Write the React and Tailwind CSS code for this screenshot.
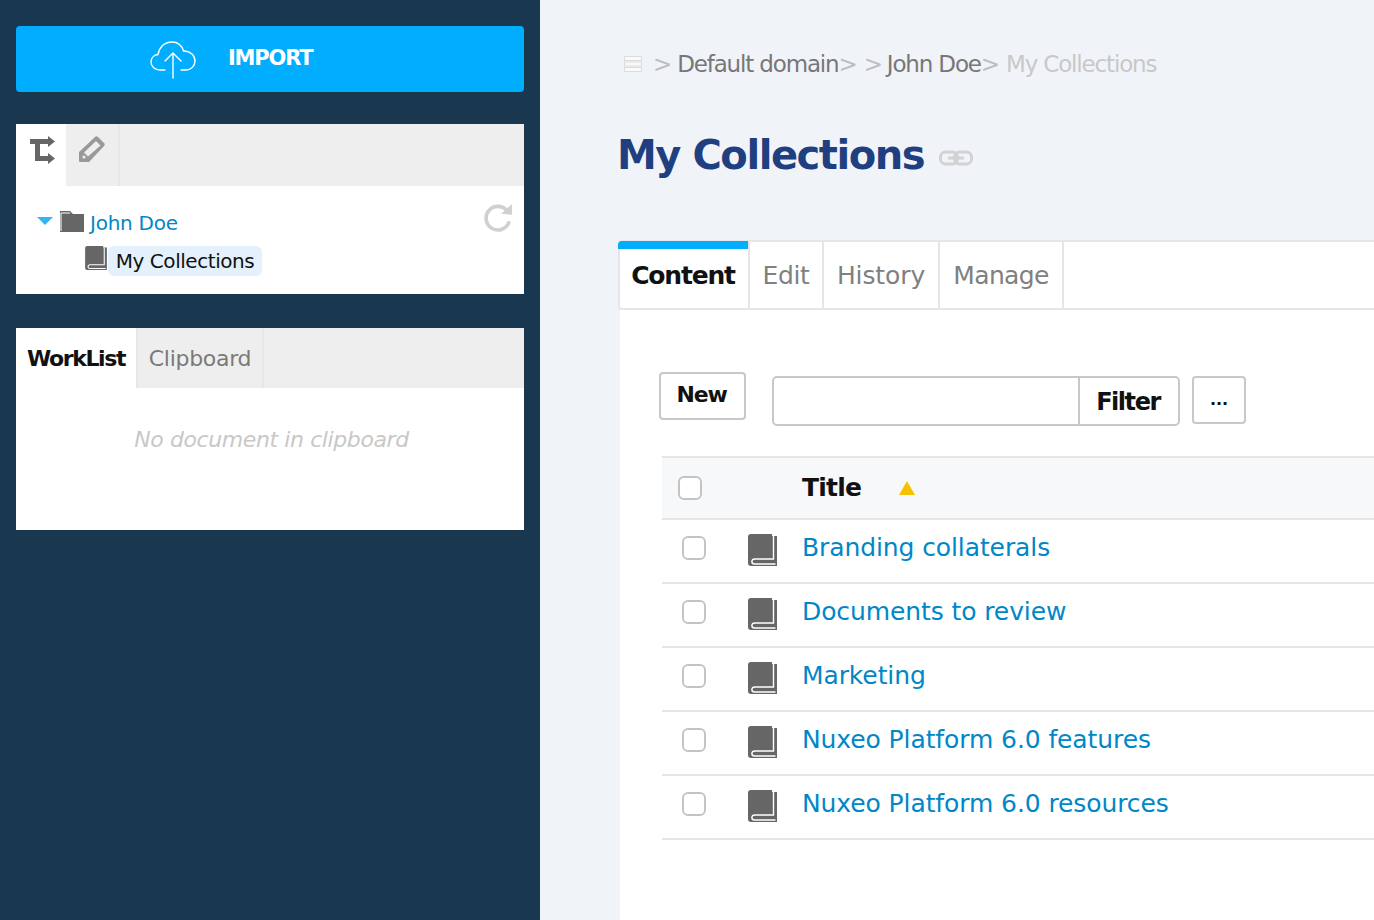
const font = { fontFamily: '"DejaVu Sans", sans-serif' };

function Book({ className = "" }) {
  return (
    <svg viewBox="0 0 29 32" className={className}>
      <path d="M3 0H24V2H29V32H3C1 32 0 31 0 29V3C0 1 1 0 3 0Z" fill="#666" />
      <path d="M25.5 2V25H6.5C3 25 3 30 6.5 30H27.5" fill="none" stroke="#fff" strokeWidth="1.4" />
      <path d="M6 27.5H25" stroke="#666" strokeWidth="1.6" />
    </svg>
  );
}

function Check() {
  return <span className="block w-6 h-6 rounded-[6px] border-2 border-[#c4c4c4] bg-white" />;
}

function Gt({ c = "" }) {
  return <span className={"text-[#bdbdbd] " + c}>&gt;</span>;
}

const rows = [
  "Branding collaterals",
  "Documents to review",
  "Marketing",
  "Nuxeo Platform 6.0 features",
  "Nuxeo Platform 6.0 resources",
];

export default function App() {
  return (
    <div className="flex w-[1374px] h-[920px] overflow-hidden bg-[#f0f4f9]" style={font}>
      <aside className="w-[540px] shrink-0 bg-[#1a3750] px-4 pt-[26px]">
        <button className="flex items-center w-full h-[66px] rounded-[4px] bg-[#00adff] text-white font-bold text-[21px] tracking-[-1.2px]">
          <svg viewBox="0 0 46 40" className="w-[46px] h-[40px] ml-[134px] mt-[1px]" fill="none" stroke="#fff" strokeWidth="1.4" strokeLinecap="round" strokeLinejoin="round">
            <path d="M15 30H10C5 30 1 26.5 1 22C1 18 4 15 8 14.5C9 8 14 2 22 2C28 2 32 6 33.5 11C40 10.5 45 15.5 45 21C45 26 41 30 36 30H31" />
            <path d="M23 38V14M15 21L23 13L31 21" />
          </svg>
          <span className="ml-[32px]">IMPORT</span>
        </button>

        <section className="mt-8 h-[170px] bg-white">
          <div className="flex h-[62px] bg-[#eeeeee]">
            <div className="flex justify-center pt-[12px] pl-[2px] w-[50px] bg-white">
              <svg viewBox="0 0 25 28" className="w-[25px] h-[28px]" fill="#666">
                <path d="M0 3H18V0L25 5.5L18 11V8H10V20H18V17L25 22.5L18 28V25H5V8H0Z" />
              </svg>
            </div>
            <div className="flex justify-center pt-[11px] w-[54px] border-r-2 border-[#e6e6e6]">
              <svg viewBox="0 0 28 28" className="w-[28px] h-[28px]">
                <path d="M2 27C1 27 1 26 1 25V17L17 2C18 1 19 1 20 2L26 8C27 9 27 10 26 11L11 27Z" fill="#999" />
                <path d="M18 6L22.5 10.5L10 21.5L6 17.5Z" fill="#eee" />
                <circle cx="6" cy="22" r="1.6" fill="#eee" />
              </svg>
            </div>
          </div>
          <div className="relative pl-[21px] pt-[18px] text-[20px] tracking-[-0.25px]">
            <svg viewBox="0 0 28 28" className="absolute right-[11px] top-[17px] w-[30px] h-[30px]" fill="none">
              <path d="M23 8A11 11 0 1 0 24.5 17" stroke="#d0d0d0" strokeWidth="3.4" />
              <path d="M17 10L27 11V1Z" fill="#d0d0d0" />
            </svg>
            <div className="flex items-center h-[38px]">
              <span className="w-0 h-0 border-x-[8px] border-x-transparent border-t-[8px] border-t-[#35b4f4] -mt-[4px]" />
              <svg viewBox="0 0 24 22" className="w-[24px] h-[22px] ml-[7px] -mt-[5px]">
                <path d="M0 22V1H10L13 4H24V22Z" fill="#666" />
                <path d="M1 21V3H10" fill="none" stroke="#fff" strokeWidth="1" />
              </svg>
              <span className="ml-[6px] text-[#0087c7]">John Doe</span>
            </div>
            <div className="flex items-center h-[30px] ml-[48px] mt-[4px] tracking-[-0.45px]">
              <Book className="w-[22px] h-[24px] -mt-[6px]" />
              <span className="ml-[1px] w-[154px] justify-center h-[30px] flex items-center rounded-[6px] bg-[#e4f0fb] text-[#111] whitespace-nowrap">My Collections</span>
            </div>
          </div>
        </section>

        <section className="mt-[34px] h-[202px] bg-white">
          <div className="flex h-[60px] bg-[#eeeeee] text-[22px] tracking-[-0.3px]">
            <div className="flex items-center justify-center w-[120px] bg-white font-bold text-[#111] tracking-[-1.4px]">WorkList</div>
            <div className="flex items-center justify-center w-[128px] border-x-2 border-[#e6e6e6] text-[#7a7a7a]">Clipboard</div>
          </div>
          <p className="pt-[36px] pl-[3px] text-center italic text-[22px] tracking-[-0.4px] text-[#c8c8c8] leading-[32px]">No document in clipboard</p>
        </section>
      </aside>

      <main className="flex-1 min-w-0">
        <div className="flex items-center h-[28px] mt-[50px] pl-[84px] text-[23px] tracking-[-1.15px] text-[#777] whitespace-nowrap">
          <svg viewBox="0 0 18 16" className="w-[18px] h-[16px]" fill="#fafafa" stroke="#dcdcdc">
            <rect x="0.5" y="0.5" width="17" height="4" />
            <rect x="0.5" y="6" width="17" height="4" />
            <rect x="0.5" y="11.5" width="17" height="4" />
          </svg>
          <Gt c="ml-[11px]" />
          <span className="ml-[6px]">Default domain</span>
          <Gt />
          <Gt c="ml-[7px]" />
          <span className="ml-[5px]">John Doe</span>
          <Gt />
          <span className="ml-[7px] text-[#c8c8c8]">My Collections</span>
        </div>

        <div className="flex items-center h-[60px] mt-[47px] pl-[78px]">
          <h1 className="text-[40px] font-bold text-[#1f3f80] tracking-[-1.45px] leading-[60px] -ml-[1px]">My Collections</h1>
          <svg viewBox="0 0 34 16" className="w-[34px] h-[16px] ml-[15px] mt-[6px]" fill="none" stroke="#d2d2d2" strokeWidth="3">
            <rect x="1.5" y="2" width="17" height="12" rx="5" />
            <rect x="15.5" y="2" width="17" height="12" rx="5" />
            <path d="M9 8H25" />
          </svg>
        </div>

        <div className="flex h-[70px] mt-[55px] ml-[78px] bg-white border-y-2 border-[#e6e6e6] border-l-2 rounded-l-[4px] text-[25px] text-[#808080]">
          <div className="relative flex items-center justify-center w-[130px] pr-[2px] border-r-2 border-[#e6e6e6] font-bold text-[#111] pt-[1px] tracking-[-1.2px]">
            <span className="absolute -left-[2px] -top-[1px] right-0 h-[8px] bg-[#00adff] rounded-tl-[4px]" />
            Content
          </div>
          <div className="flex items-center justify-center w-[74px] border-r-2 border-[#e6e6e6] pt-[1px] tracking-[-0.3px]">Edit</div>
          <div className="flex items-center justify-center w-[116px] border-r-2 border-[#e6e6e6] pt-[1px] tracking-[-0.1px]">History</div>
          <div className="flex items-center justify-center w-[124px] border-r-2 border-[#e6e6e6] pt-[1px] tracking-[-0.65px]">Manage</div>
        </div>

        <div className="ml-[80px] h-[620px] bg-white pt-[62px]">
          <div className="flex items-start pl-[39px] h-[84px]">
            <button className="w-[87px] h-[48px] bg-white border-2 border-[#c8c8c8] rounded-[4px] font-bold text-[22px] tracking-[-1.2px] text-[#111] pb-[4px] pr-[2px]">New</button>
            <div className="flex w-[408px] h-[50px] ml-[26px] mt-[4px] border-2 border-[#c8c8c8] rounded-[5px]">
              <div className="flex-1" />
              <div className="w-[100px] pr-[2px] pt-[2px] border-l-2 border-[#c8c8c8] flex items-center justify-center font-bold text-[24px] tracking-[-1.45px] text-[#111]">Filter</div>
            </div>
            <button className="w-[54px] h-[48px] ml-[12px] mt-[4px] bg-white border-2 border-[#c8c8c8] rounded-[4px] font-bold text-[16px] text-[#111]">...</button>
          </div>

          <div className="ml-[42px]">
            <div className="flex items-center h-[64px] pb-[1px] bg-[#f7f8fa] border-y-2 border-[#e6e6e6]">
              <span className="ml-[16px]"><Check /></span>
              <span className="ml-[100px] font-bold text-[25px] tracking-[-0.8px] text-[#111]">Title</span>
              <span className="ml-[38px] w-0 h-0 border-x-[8px] border-x-transparent border-b-[14px] border-b-[#f6c100]" />
            </div>
            {rows.map((r) => (
              <div key={r} className="flex items-center h-[64px] border-b-2 border-[#e6e6e6]">
                <span className="ml-[20px] -mt-[7px]"><Check /></span>
                <Book className="ml-[42px] w-[29px] h-[32px] -mt-[3px]" />
                <span className="ml-[25px] -mt-[6px] text-[25px] tracking-[-0.1px] text-[#0087c7] whitespace-nowrap">{r}</span>
              </div>
            ))}
          </div>
        </div>
      </main>
    </div>
  );
}
